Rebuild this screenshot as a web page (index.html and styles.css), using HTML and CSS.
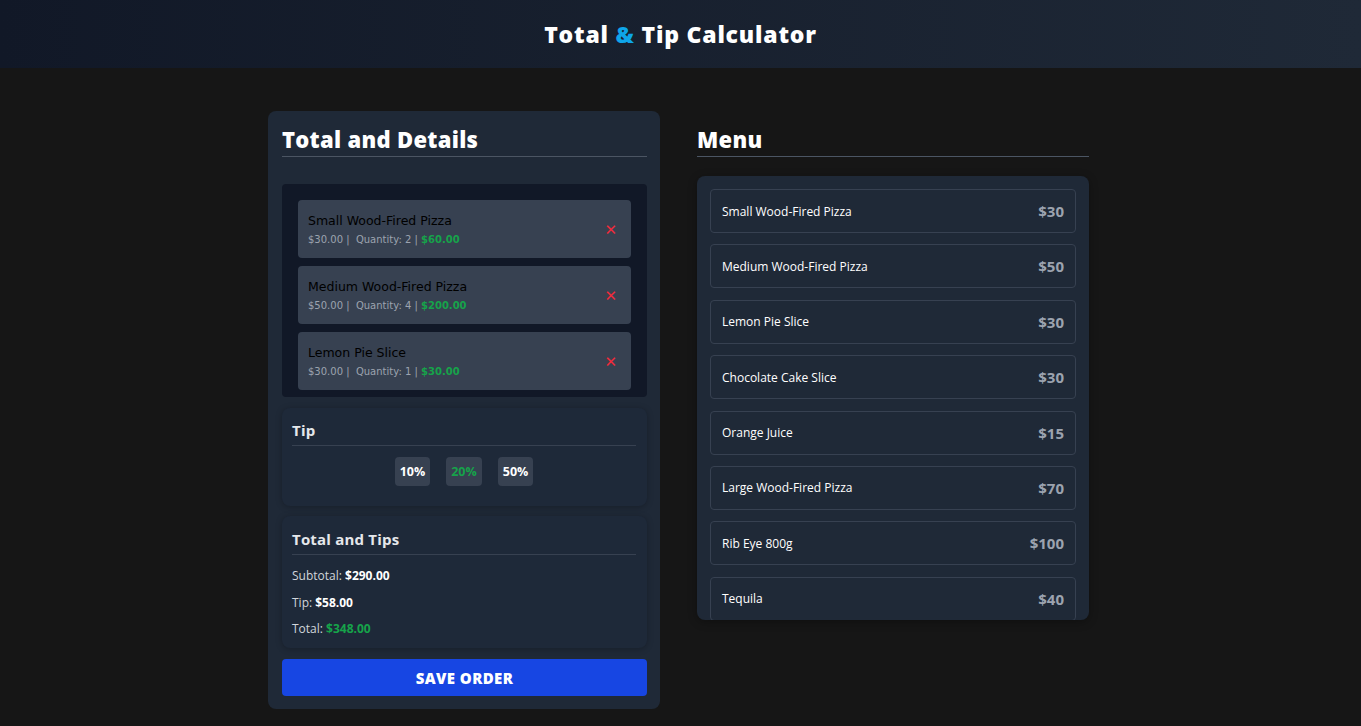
FILE: index.html
```html
<!DOCTYPE html>
<html lang="en">
<head>
<meta charset="utf-8">
<title>Total &amp; Tip Calculator</title>
<link rel="stylesheet" href="styles.css">
</head>
<body>
<header class="topbar">
  <h1 class="title">Total <span class="amp">&amp;</span> Tip Calculator</h1>
</header>
<main class="layout">
  <section class="panel">
    <h2 class="panel-title">Total and Details</h2>
    <div class="cart">
      <div class="cart-item">
        <div class="cart-info">
          <div class="cart-name">Small Wood-Fired Pizza</div>
          <div class="cart-meta">$30.00 | &nbsp;Quantity: 2 | <b class="green">$60.00</b></div>
        </div>
        <span class="remove">&#x2715;</span>
      </div>
      <div class="cart-item">
        <div class="cart-info">
          <div class="cart-name">Medium Wood-Fired Pizza</div>
          <div class="cart-meta">$50.00 | &nbsp;Quantity: 4 | <b class="green">$200.00</b></div>
        </div>
        <span class="remove">&#x2715;</span>
      </div>
      <div class="cart-item">
        <div class="cart-info">
          <div class="cart-name">Lemon Pie Slice</div>
          <div class="cart-meta">$30.00 | &nbsp;Quantity: 1 | <b class="green">$30.00</b></div>
        </div>
        <span class="remove">&#x2715;</span>
      </div>
    </div>
    <div class="box">
      <h3 class="box-title">Tip</h3>
      <div class="tips">
        <button class="tip">10%</button>
        <button class="tip active">20%</button>
        <button class="tip">50%</button>
      </div>
    </div>
    <div class="box totals">
      <h3 class="box-title">Total and Tips</h3>
      <p class="line">Subtotal: <b>$290.00</b></p>
      <p class="line">Tip: <b>$58.00</b></p>
      <p class="line">Total: <b class="green">$348.00</b></p>
    </div>
    <button class="save">SAVE ORDER</button>
  </section>
  <section class="menu-col">
    <h2 class="panel-title">Menu</h2>
    <div class="menu">
      <div class="menu-item"><span class="menu-name">Small Wood-Fired Pizza</span><span class="price">$30</span></div>
      <div class="menu-item"><span class="menu-name">Medium Wood-Fired Pizza</span><span class="price">$50</span></div>
      <div class="menu-item"><span class="menu-name">Lemon Pie Slice</span><span class="price">$30</span></div>
      <div class="menu-item"><span class="menu-name">Chocolate Cake Slice</span><span class="price">$30</span></div>
      <div class="menu-item"><span class="menu-name">Orange Juice</span><span class="price">$15</span></div>
      <div class="menu-item"><span class="menu-name">Large Wood-Fired Pizza</span><span class="price">$70</span></div>
      <div class="menu-item"><span class="menu-name">Rib Eye 800g</span><span class="price">$100</span></div>
      <div class="menu-item"><span class="menu-name">Tequila</span><span class="price">$40</span></div>
    </div>
  </section>
</main>
</body>
</html>
```
FILE: styles.css
```css
* { box-sizing: border-box; }
html, body { margin: 0; padding: 0; }
body {
  background: #161616;
  color: #f3f4f6;
  font-family: "Open Sans", "Liberation Sans", sans-serif;
  height: 726px;
  overflow: hidden;
}
.topbar {
  height: 68px;
  background: linear-gradient(90deg, #111827 0%, #1f2937 100%);
  display: flex;
  align-items: center;
  justify-content: center;
}
.title {
  margin: 0;
  font-size: 23px;
  font-weight: 800;
  color: #ffffff;
  letter-spacing: 0.8px;
}
.amp { color: #0ea5e9; }
.layout {
  width: 825px;
  margin: 43px auto 0;
  display: flex;
  align-items: flex-start;
  gap: 37px;
}
.panel {
  width: 392px;
  background: #1f2937;
  border-radius: 8px;
  padding: 10px 13px 13px 14px;
}
.menu-col {
  width: 392px;
  padding-top: 10px;
}
.panel-title {
  margin: 0;
  font-size: 22px;
  font-weight: 800;
  color: #ffffff;
  padding: 4px 0 3px;
  line-height: 28px;
  letter-spacing: 0.3px;
  border-bottom: 1px solid #4b5563;
}
.cart {
  margin-top: 27px;
  background: #111827;
  border-radius: 4px;
  padding: 16px 16px 7px;
}
.cart-item {
  background: #374151;
  border-radius: 4px;
  height: 58px;
  margin-bottom: 8px;
  padding: 2px 10px 0;
  display: flex;
  align-items: center;
  justify-content: space-between;
}
.cart-item:last-child { margin-bottom: 0; }
.cart-name {
  font-family: "DejaVu Sans", Verdana, sans-serif;
  font-size: 12.5px;
  color: #000000;
  line-height: 16px;
}
.cart-meta {
  font-family: "DejaVu Sans", Verdana, sans-serif;
  font-size: 10px;
  color: #9ca3af;
  margin-top: 4px;
  line-height: 14px;
}
.cart-meta b { font-weight: 700; }
.green { color: #16a34a; }
.remove {
  color: #ef2b3b;
  font-size: 15px;
  font-weight: 700;
  margin-right: 4px;
  font-family: "DejaVu Sans", sans-serif;
}
.box {
  margin-top: 11px;
  background: #1e2939;
  border-radius: 8px;
  box-shadow: 0 1px 6px rgba(0,0,0,0.25);
  padding: 13px 11px 10px 10px;
}
.totals {
  margin-top: 10px;
  padding-top: 14px;
  padding-bottom: 12px;
}
.box-title {
  margin: 0;
  font-size: 15px;
  font-weight: 700;
  color: #e5e7eb;
  padding-bottom: 5px;
  line-height: 19px;
  letter-spacing: 0.2px;
  border-bottom: 1px solid #374151;
}
.tips {
  display: flex;
  justify-content: center;
  gap: 16px;
  padding: 11px 0 10px;
}
.tip {
  font-family: "Open Sans", "Liberation Sans", sans-serif;
  background: #374151;
  border: 0;
  border-radius: 4px;
  color: #ffffff;
  font-weight: 700;
  font-size: 12.5px;
  height: 29px;
  padding: 0 5px;
}
.tip.active { color: #16a34a; }
.line {
  margin: 13px 0 0;
  font-size: 12px;
  color: #d1d5db;
  line-height: 15px;
}
.line + .line { margin-top: 11.5px; }
.line b { color: #ffffff; font-weight: 700; }
.line b.green { color: #16a34a; }
.save {
  display: block;
  margin-top: 11px;
  width: 100%;
  height: 37px;
  border: 0;
  border-radius: 4px;
  background: #1746e3;
  color: #ffffff;
  font-family: "Open Sans", "Liberation Sans", sans-serif;
  font-weight: 800;
  font-size: 15px;
  letter-spacing: 0.4px;
}
.menu {
  margin-top: 19px;
  height: 444px;
  overflow: hidden;
  background: #1f2937;
  border-radius: 8px;
  padding: 13px 13px;
  box-shadow: 0 2px 10px rgba(0,0,0,0.3);
}
.menu-item {
  height: 44px;
  border: 1px solid #374151;
  border-radius: 4px;
  display: flex;
  align-items: center;
  justify-content: space-between;
  padding: 0 11px;
  margin-bottom: 11.4px;
}
.menu-name {
  font-size: 12px;
  color: #ffffff;
}
.price {
  font-size: 15px;
  font-weight: 700;
  color: #9ca3af;
}
```
